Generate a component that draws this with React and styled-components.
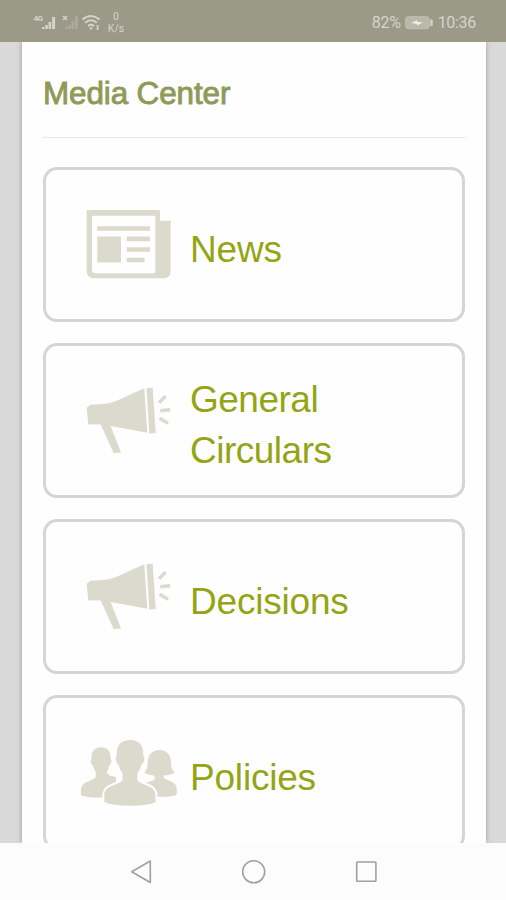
import React from 'react';
import styled, { createGlobalStyle } from 'styled-components';

const GlobalStyle = createGlobalStyle`
  * {
    box-sizing: border-box;
  }

  body {
    margin: 0;
    background: #d9d9d9;
    font-family: "Liberation Sans", Arial, sans-serif;
  }
`;

const Screen = styled.div`
  display: flex;
  flex-direction: column;
  width: 506px;
  height: 900px;
  overflow: hidden;
  background: #d9d9d9;
`;

const StatusBar = styled.header`
  display: flex;
  justify-content: space-between;
  flex: 0 0 42px;
  height: 42px;
  padding: 0 30px 0 33px;
  background: #9b9988;
  color: #d6d4c8;
  font-family: Roboto, sans-serif;
`;

const StatusGroup = styled.div`
  display: flex;
  align-items: center;
  height: 45px;
`;

const StatusText = styled.span`
  font-size: 16px;
  line-height: 20px;
  letter-spacing: ${(props) => props.$spacing || '0'};
`;

const NetworkSpeed = styled.div`
  display: flex;
  flex-direction: column;
  align-items: center;
  width: 18px;
  margin-left: 7px;
  font-size: 10.5px;
  line-height: 12px;
`;

const BatteryIcon = styled.svg`
  margin: 0 5px 0 4px;
`;

const Content = styled.main`
  flex: 1;
  min-height: 0;
  overflow: hidden;
  padding: 0 20px 0 22px;
`;

const Page = styled.section`
  height: 100%;
  padding: 0 21px;
  overflow: hidden;
  background: #fefefe;
  box-shadow: 0 0 5px rgba(0, 0, 0, 0.3);
`;

const PageTitle = styled.h1`
  height: 97px;
  margin: 0 0 28px;
  padding-top: 33px;
  background: repeating-linear-gradient(90deg, #e4e4e4 0 3px, #f4f4f4 3px 4px) 0 95px / 100% 1px no-repeat;
  color: #8f9a58;
  font-size: 31.4px;
  font-weight: 400;
  line-height: 38px;
  letter-spacing: -0.1px;
  -webkit-text-stroke: 0.9px #8f9a58;
`;

const CardList = styled.nav`
  display: flex;
  flex-direction: column;
  gap: 21px;
`;

const Card = styled.a`
  display: flex;
  align-items: center;
  flex: 0 0 155px;
  height: 155px;
  padding-left: 29px;
  border: 3px solid #d5d5d5;
  border-radius: 14px;
  color: #93a514;
`;

const CardIcon = styled.svg`
  flex: none;
  width: 104px;
  height: 101px;
  fill: #dbdacd;
`;

const CardLabel = styled.span`
  width: 200px;
  margin: 9px 0 0 11px;
  font-size: 37px;
  line-height: 51px;
  letter-spacing: ${(props) => props.$spacing || '0'};
`;

const NavigationBar = styled.footer`
  display: flex;
  align-items: center;
  justify-content: center;
  gap: 88px;
  flex: 0 0 57px;
  background: #fcfcfc;
`;

const NavIcon = styled.svg`
  width: 25px;
  height: 25px;
  fill: none;
  stroke: #a0a0a0;
  stroke-width: 1.6;
  stroke-linejoin: round;
`;

const SignalIcons = () => (
  <svg width="67" height="28" viewBox="0 0 67 28" fill="#d6d4c8">
    <text x="0.5" y="12" fontSize="8" fontWeight="700" fontFamily="Roboto" letterSpacing="-0.5">4G</text>
    <path d="M9 18h2.5v2H9zM12.3 16h2.5v4h-2.5zM15.6 13h2.6v7h-2.6zM19.1 8h3v12h-3z" />
    <path d="M30 7l4 4M34 7l-4 4" stroke="#d6d4c8" strokeWidth="1.5" />
    <path d="M32 18h2.5v2H32zM35.3 16h2.5v4h-2.5zM38.6 12h2.5v8h-2.5zM42 7h2.8v13H42z" opacity="0.3" />
    <g fill="none" stroke="#d6d4c8" strokeWidth="2">
      <path d="M49.5 10.5q8.5-7 17 0M52.2 13.7q5.8-4.8 11.6 0M55 17q3-2.4 6 0" />
    </g>
    <path d="M56 18.5h4l-2 2.5zM63.7 16h1.8v5h-1.8z" />
  </svg>
);

const Battery = () => (
  <BatteryIcon width="28" height="14" viewBox="0 0 28 14">
    <rect x="0.7" y="0.7" width="23.5" height="12" rx="2.5" fill="#bab8aa" stroke="#c3c1b4" />
    <path d="M25.3 3.5h1.4q1 0 1 1v4.5q0 1-1 1h-1.4z" fill="#d6d4c8" />
    <path d="M6 7l6-2.8v1.6l6 .6-6 3V8z" fill="#eeede6" />
  </BatteryIcon>
);

const NewsIcon = () => (
  <CardIcon viewBox="0 0 104 101">
    <path
      fillRule="evenodd"
      d="M11.7 16H85v10.7h10.7V77q0 7.3-7.3 7.3H19q-7.3 0-7.3-7.3zM17 21.7v54q0 3.6 3.6 3.6h59.7V21.7z"
    />
    <path d="M22.3 32.3H75v4.5H22.3zM22.3 42.6H46v26H22.3zM51.7 42.6H75v4.6H51.7zM51.7 53.2H75v4.6H51.7zM51.7 63.7h17.8v4.6H51.7z" />
  </CardIcon>
);

const MegaphoneIcon = () => (
  <CardIcon viewBox="0 0 104 101">
    <path d="M11.7 37.7l4-3L28.3 34q7-.4 13.4-3.3l27.6-12.4 3 44.4L35.7 56 46 82.5l-7.3.8-13-28.8-12.4-.3z" />
    <path d="M71.5 18l6.2-.3 3 45.5-6.4.2z" />
    <path d="M84 32.7l6.6-6.4M85.3 40.8l9.9-1M84.7 48.3l8.4 5" stroke="#dbdacd" strokeWidth="3.5" />
  </CardIcon>
);

const PeopleIcon = () => (
  <CardIcon viewBox="0 0 104 101">
    <path d="M26 25.3c-6.5 0-9.7 4-9.4 11.3-1.4 1.4-.8 5.6 1.4 6.8.5 3 1.4 4.6 2.8 6.2v5.2C18.5 59.5 6 59 6 68v5.2q6 2.5 21 2.5h14V55c-6-.7-9-2.5-9.3-5.4 1.3-1.6 2.1-3.4 2.5-6.2 2.4-1.4 2.8-5 1.4-6.8.1-7.3-3.1-11.3-9.6-11.3z" />
    <path d="M84.4 28c-8 0-11.5 5.5-11.8 13 0 4.3-1.2 7-3.3 9.5 2.7 2 6.5 3 10.3 3.1v4.2L68 62v12.8h20q9.7 0 13.7-2.3V67c0-8-9.3-8-12.7-11v-2.4c4-.1 8-1.1 10.8-3.1-2.9-2.5-3.8-5.2-3.8-9.5 0-7.5-3.6-13-11.6-13z" />
    <path
      d="M55 18c-9.2 0-13.7 5.3-13.2 15.6-2.2 1.8-1 8 2 9.1.7 4 1.7 6 3.8 8.2v6.5C46 63.5 29.3 62 29.3 73.5V80q7.5 3.8 25.7 3.8T80.5 80v-6.5c0-11.5-16.5-10-18.2-16.1v-6.5c2.1-2.2 3.2-4.2 3.9-8.2 3-1.1 4.2-7.3 2-9.1C68.7 23.3 64.2 18 55 18z"
      stroke="#fefefe"
      strokeWidth="4"
      paintOrder="stroke"
    />
  </CardIcon>
);

const menuItems = [
  { label: 'News', icon: NewsIcon, spacing: '-0.2px' },
  { label: 'General Circulars', icon: MegaphoneIcon, spacing: '-0.5px' },
  { label: 'Decisions', icon: MegaphoneIcon, spacing: '-0.2px' },
  { label: 'Policies', icon: PeopleIcon, spacing: '-0.2px' },
];

const App = () => {
  return (
    <>
      <GlobalStyle />
      <Screen>
        {/* Status Bar */}
        <StatusBar>
          <StatusGroup>
            <SignalIcons />
            <NetworkSpeed>
              <span>0</span>
              <span>K/s</span>
            </NetworkSpeed>
          </StatusGroup>
          <StatusGroup>
            <StatusText $spacing="-0.3px">82%</StatusText>
            <Battery />
            <StatusText $spacing="-0.3px">10:36</StatusText>
          </StatusGroup>
        </StatusBar>

        {/* Media Center */}
        <Content>
          <Page>
            <PageTitle>Media Center</PageTitle>
            <CardList>
              {menuItems.map(({ label, icon: Icon, spacing }) => (
                <Card key={label}>
                  <Icon />
                  <CardLabel $spacing={spacing}>{label}</CardLabel>
                </Card>
              ))}
            </CardList>
          </Page>
        </Content>

        {/* System Navigation */}
        <NavigationBar>
          <NavIcon viewBox="0 0 25 25">
            <path d="M3.7 12.8L22.3 2v21.5z" />
          </NavIcon>
          <NavIcon viewBox="0 0 25 25">
            <circle cx="12.7" cy="12.8" r="11" />
          </NavIcon>
          <NavIcon viewBox="0 0 25 25">
            <rect x="2.7" y="3" width="19.2" height="19.2" rx="0.7" />
          </NavIcon>
        </NavigationBar>
      </Screen>
    </>
  );
};

export default App;
